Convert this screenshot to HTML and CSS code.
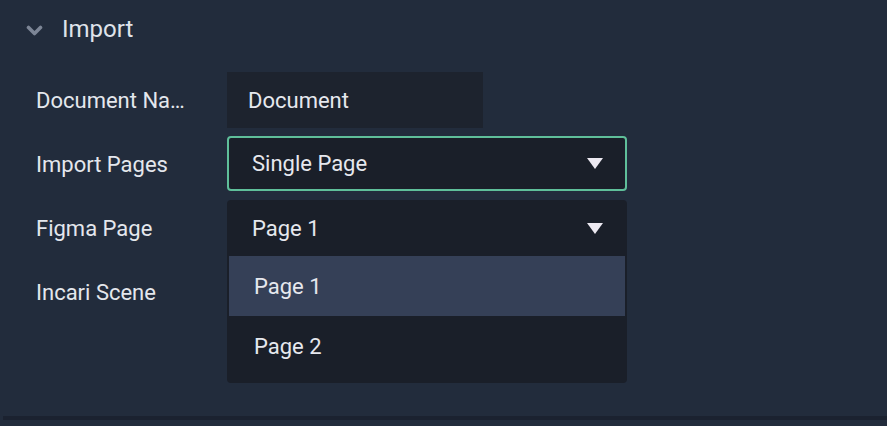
FILE: index.html
```html
<!DOCTYPE html>
<html>
<head>
<meta charset="utf-8">
<link rel="stylesheet" href="styles.css">
</head>
<body>
<div class="panel">
  <div class="header">
    <svg class="chev" width="17" height="11" viewBox="0 0 17 11"><path d="M2.5 2.5 L8.5 8.5 L14.5 2.5" fill="none" stroke="#7d8696" stroke-width="3.6" stroke-linecap="round" stroke-linejoin="round"/></svg>
    <span class="title">Import</span>
  </div>
  <div class="rows">
    <div class="row">
      <div class="label">Document Name</div>
      <div class="input">Document</div>
    </div>
    <div class="row">
      <div class="label">Import Pages</div>
      <div class="select focused">
        <span>Single Page</span>
        <svg class="tri" width="16" height="11" viewBox="0 0 16 11"><path d="M0 0 H16 L8 11 Z" fill="#ece9f1"/></svg>
      </div>
    </div>
    <div class="row">
      <div class="label">Figma Page</div>
      <div class="select open">
        <span>Page 1</span>
        <svg class="tri" width="16" height="11" viewBox="0 0 16 11"><path d="M0 0 H16 L8 11 Z" fill="#ece9f1"/></svg>
        <div class="menu">
          <div class="option active">Page 1</div>
          <div class="option">Page 2</div>
        </div>
      </div>
    </div>
    <div class="row">
      <div class="label">Incari Scene</div>
    </div>
  </div>
  <div class="footer"></div>
</div>
</body>
</html>
```

FILE: styles.css
```css
html, body {
  margin: 0;
  padding: 0;
  background: #222c3c;
  font-family: Roboto, "Liberation Sans", sans-serif;
  color: #e6e8ee;
  overflow: hidden;
}
.panel {
  width: 887px;
  height: 426px;
  display: flex;
  flex-direction: column;
}
.header {
  height: 58px;
  display: flex;
  align-items: center;
  padding-left: 26px;
  box-sizing: border-box;
}
.chev {
  display: block;
  margin-right: 19px;
  margin-top: 3px;
}
.title {
  font-size: 24px;
  color: #dfe3ea;
}
.rows {
  margin-top: 14px;
  display: flex;
  flex-direction: column;
  gap: 8px;
  padding-left: 36px;
}
.row {
  height: 56px;
  display: flex;
  align-items: center;
}
.label {
  width: 152px;
  margin-right: 39px;
  font-size: 22px;
  white-space: nowrap;
  overflow: hidden;
  text-overflow: ellipsis;
  color: #e4e7ed;
}
.input {
  width: 256px;
  height: 56px;
  box-sizing: border-box;
  background: #1d232e;
  display: flex;
  align-items: center;
  padding-left: 21px;
  font-size: 22px;
}
.select {
  position: relative;
  width: 400px;
  height: 56px;
  box-sizing: border-box;
  background: #1a1f29;
  border-radius: 4px;
  display: flex;
  align-items: center;
  justify-content: space-between;
  padding: 0 24px 0 25px;
  font-size: 22px;
}
.select.focused {
  height: 55px;
  border: 2px solid #5fbf9a;
  padding-left: 23px;
  padding-right: 22px;
  margin-top: -1px;
}
.select.open {
  border-radius: 4px 4px 0 0;
}
.tri {
  display: block;
}
.menu {
  position: absolute;
  left: 0;
  top: 56px;
  width: 400px;
  box-sizing: border-box;
  padding: 0 2px 7px;
  background: #1a1f29;
  border-radius: 0 0 4px 4px;
}
.option {
  height: 60px;
  display: flex;
  align-items: center;
  padding-left: 25px;
  font-size: 22px;
}
.option.active {
  background: #354057;
}
.footer {
  margin-top: auto;
  margin-bottom: 6px;
  margin-left: 3px;
  height: 4px;
  background: #1b2230;
}
```
